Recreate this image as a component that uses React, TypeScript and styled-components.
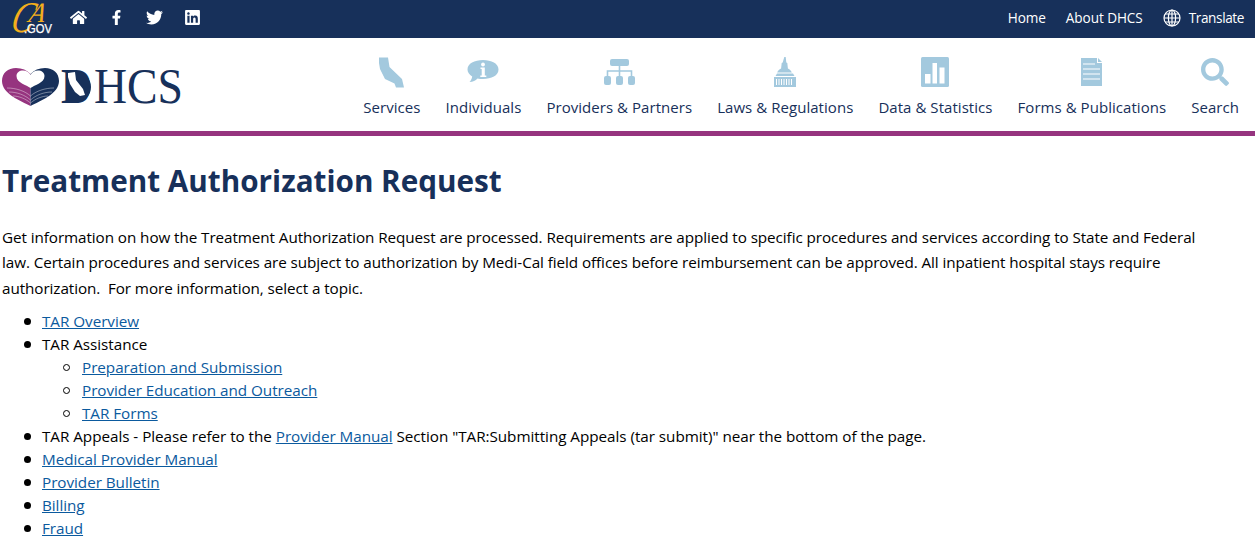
import React from "react";
import styled, { createGlobalStyle } from "styled-components";
import { FaHome, FaFacebookF, FaTwitter, FaLinkedin, FaSearch } from "react-icons/fa";

const Global = createGlobalStyle`
  html, body { margin: 0; padding: 0; background: #fff; }
  body { font-family: "Open Sans", "Noto Sans", Arial, sans-serif; font-size: 15.25px; color: #000; }
`;

const TopBar = styled.div`
  height: 38px; background: #17305a; display: flex; align-items: center; justify-content: space-between;
  padding: 0 11px 0 5px; color: #fff;
`;
const TopLeft = styled.div`display: flex; align-items: center;`;
const CaLogo = styled.svg`width: 48px; height: 36px; display: block; margin-right: 6px;`;
const SocialLink = styled.a`
  display: flex; width: 38px; justify-content: center; color: #fff; font-size: 17px; margin-top: -4px;
`;
const TopRight = styled.div`display: flex; align-items: center; gap: 20px; font-size: 13.6px; letter-spacing: -0.08px; margin-top: -3px;`;
const TopLink = styled.a`
  color: #fff; display: flex; align-items: center; gap: 8px;
  letter-spacing: ${(p: { $tight?: boolean }) => (p.$tight ? "-0.4px" : "inherit")};
`;

const Header = styled.header`
  height: 93px; border-bottom: 5px solid #96347f; display: flex; justify-content: space-between; align-items: stretch;
  padding: 0 16px 0 1px;
`;
const Logo = styled.svg`width: 200px; height: 60px; margin-top: 17px; display: block;`;
const Nav = styled.nav`display: flex; gap: 25px;`;
const NavItem = styled.a`
  display: flex; flex-direction: column; align-items: center; color: #17305a; font-size: 15px; letter-spacing: 0.05px;
  white-space: nowrap; padding-top: 17px;
`;
const NavIcon = styled.span`
  height: 33px; display: flex; align-items: center; justify-content: center; color: #a3c9de; margin-bottom: 9px;
`;

const Main = styled.main`padding: 0 2px;`;
const Title = styled.h1`
  margin: 25px 0 23.7px; font-size: 29.7px; line-height: 40px; font-weight: 700; color: #17305a;
`;
const Intro = styled.p`margin: 0 0 8.3px; line-height: 25.6px; width: 1215px; letter-spacing: -0.08px;`;
const List = styled.ul<{ $nested?: boolean }>`
  margin: 0; padding: 0 0 0 40px; list-style: none;
  line-height: 23px; letter-spacing: -0.04px;
  & > li { position: relative; }
  & > li::before {
    content: ""; position: absolute; top: 8px; box-sizing: border-box; width: 7px; height: 7px; border-radius: 50%;
    left: ${(p) => (p.$nested ? "-19px" : "-18px")};
    background: ${(p) => (p.$nested ? "transparent" : "#000")};
    border: ${(p) => (p.$nested ? "1px solid #000" : "none")};
  }
`;
const Link = styled.a`color: #0b5a9e; text-decoration: underline;`;

const California = () => (
  <svg width="28" height="32" viewBox="0 0 28 32" fill="currentColor">
    <path d="M1 1.500h9l1.500 9.500L24 23l2 8.500h-8l-1.500-4L7 23 2 13 1 7z" />
  </svg>
);
const Info = () => (
  <svg width="32" height="26" viewBox="0 0 32 26">
    <path fill="currentColor" d="M16 1c8.500 0 15.500 3.500 15.500 9.500S24.500 20 16 20c-2 0-3.800-.2-5.500-.6C8.500 21.500 6 23 2.500 23c1.300-1.400 2.500-3.500 2.700-5.600C2.300 15.700.5 13.300.5 10.500.5 4.500 7.500 1 16 1z" />
    <circle cx="16" cy="5.500" r="1.900" fill="#fff" />
    <path fill="#fff" d="M13.500 8.500h4.300v8h1.500v1.500h-6v-1.500h1.400v-6.500h-1.200z" />
  </svg>
);
const Sitemap = () => (
  <svg width="31" height="26" viewBox="0 0 31 26" fill="currentColor">
    <rect x="6" y="0" width="19" height="7" rx="2" />
    <rect x="0" y="17" width="7" height="9" rx="2" />
    <rect x="12" y="17" width="7" height="9" rx="2" />
    <rect x="24" y="17" width="7" height="9" rx="2" />
    <path fill="none" stroke="currentColor" strokeWidth="1.600" d="M15.500 7v10M3.500 17v-5h24v5" />
  </svg>
);
const Capitol = () => (
  <svg width="22" height="30" viewBox="0 0 22 30" fill="currentColor">
    <path fillRule="evenodd" d="M10.300 0h1.400l.6 5.500 1 .5.600 5.500c2 .8 3.300 2.300 3.900 4H3.200c.6-1.700 1.900-3.200 3.900-4l.6-5.500 1-.5zM3 16.500h16L20.500 19h-19zM0 20h22v10H0zm2 2v6h1v-6zm2.500 0v6h1v-6zm2.500 0v6h1v-6zm2.500 0v6h1v-6zm2.500 0v6h1v-6zm2.500 0v6h1v-6zm2.500 0v6h1v-6z" />
  </svg>
);
const Chart = () => (
  <svg width="28" height="30" viewBox="0 0 28 30">
    <rect width="28" height="30" rx="1.500" fill="currentColor" />
    <rect x="4" y="17" width="5.500" height="9.500" fill="#fff" />
    <rect x="11.500" y="6" width="4.500" height="20.500" fill="#fff" />
    <rect x="18.500" y="10.500" width="5" height="16" fill="#fff" />
  </svg>
);
const Doc = () => (
  <svg width="21" height="28" viewBox="0 0 21 28">
    <path fill="currentColor" d="M0 0h16v5h5v23H0z" />
    <path fill="currentColor" d="M17 0l4 4h-4z" />
    <path stroke="#fff" strokeWidth="1.200" d="M2 6h12M2 11h17M2 16h17M2 21h17" />
  </svg>
);
const Globe = () => (
  <svg width="18" height="18" viewBox="0 0 18 18" fill="none" stroke="#fff" strokeWidth="1.200">
    <circle cx="9" cy="9" r="8" />
    <ellipse cx="9" cy="9" rx="3.600" ry="8" />
    <path d="M9 1v16M1 9h16M2 5h14M2 13h14" />
  </svg>
);

const navItems: [string, React.ReactNode][] = [
  ["Services", <California />],
  ["Individuals", <Info />],
  ["Providers & Partners", <Sitemap />],
  ["Laws & Regulations", <Capitol />],
  ["Data & Statistics", <Chart />],
  ["Forms & Publications", <Doc />],
  ["Search", <FaSearch size={28} />],
];

export default function App() {
  return (
    <>
      <Global />
      <TopBar>
        <TopLeft>
          <CaLogo viewBox="0 0 48 36">
            <g transform="skewX(-14)">
              <text x="12" y="31" fontFamily="Liberation Serif" fontStyle="italic" fontSize="44" fill="#f3ae1c" textLength="22" lengthAdjust="spacingAndGlyphs">C</text>
              <text x="28" y="21" fontFamily="Liberation Serif" fontStyle="italic" fontSize="28" fill="#f3ae1c" textLength="16" lengthAdjust="spacingAndGlyphs">A</text>
            </g>
            <text x="19" y="32" fontFamily="Liberation Sans" fontSize="12" fill="#fff" stroke="#fff" strokeWidth=".25" textLength="28" lengthAdjust="spacingAndGlyphs">.GOV</text>
          </CaLogo>
          <SocialLink><FaHome /></SocialLink>
          <SocialLink><FaFacebookF size={15} /></SocialLink>
          <SocialLink><FaTwitter /></SocialLink>
          <SocialLink><FaLinkedin /></SocialLink>
        </TopLeft>
        <TopRight>
          <TopLink>Home</TopLink>
          <TopLink>About DHCS</TopLink>
          <TopLink $tight><Globe />Translate</TopLink>
        </TopRight>
      </TopBar>
      <Header>
        <Logo viewBox="0 0 200 60">
          <g transform="translate(0 13)">
            <path fill="#96347f" d="M29.500 38C20 33 1 26 1 13 1 5 7 0 15 0c6 0 11 2 14.500 6z" />
            <path fill="#17305a" d="M29.500 38C39 33 58 26 58 13 58 5 52 0 44 0c-6 0-11 2-14.500 6z" />
            <path fill="#fff" d="M29.500 20c-4-3-14-5-14-12 0-3.500 3-5.500 6.500-5.500 3.500 0 6 1.500 7.500 4.500 1.500-3 4-4.500 7.500-4.500 3.500 0 6.500 2 6.500 5.500 0 7-10 9-14 12z" />
            <path fill="none" stroke="#fff" strokeWidth=".5" opacity=".8" d="M6 20c9 0 18 3 23.500 8M8 24c8 0 16 3 21.500 8M12 28c6 0 13 3 17.500 7M53 20c-9 0-18 3-23.500 8M51 24c-8 0-16 3-21.500 8M47 28c-6 0-13 3-17.500 7" />
          </g>
          <path fill="#17305a" d="M65 16h6c13 0 19 8 19 16s-6 16-19 16h-6z" />
          <text x="60" y="48" fontFamily="Liberation Serif" fontWeight="700" fontSize="50" fill="#17305a" textLength="31" lengthAdjust="spacingAndGlyphs">D</text>
          <path fill="#fff" d="M67 18l7-1 1 8 7 9 2 6-5 1-5-4-5-8-2-7z" />
          <text x="93" y="48" fontFamily="Liberation Serif" fontSize="50" fill="#17305a" textLength="89" lengthAdjust="spacingAndGlyphs">HCS</text>
        </Logo>
        <Nav>
          {navItems.map(([label, icon]) => (
            <NavItem key={label}>
              <NavIcon>{icon}</NavIcon>
              {label}
            </NavItem>
          ))}
        </Nav>
      </Header>
      <Main>
        <Title>Treatment Authorization Request</Title>
        <Intro>
          Get information on how the Treatment Authorization Request are processed. Requirements are applied to specific procedures and services according to State and Federal law. Certain procedures and services are subject to authorization by Medi-Cal field offices before reimbursement can be approved. All inpatient hospital stays require authorization.&nbsp; For more information, select a topic.
        </Intro>
        <List>
          <li><Link>TAR Overview</Link></li>
          <li>TAR Assistance
            <List $nested>
              <li><Link>Preparation and Submission</Link></li>
              <li><Link>Provider Education and Outreach</Link></li>
              <li><Link>TAR Forms</Link></li>
            </List>
          </li>
          <li>TAR Appeals - Please refer to the <Link>Provider Manual</Link> Section "TAR:Submitting Appeals (tar submit)" near the bottom of the page.</li>
          <li><Link>Medical Provider Manual</Link></li>
          <li><Link>Provider Bulletin</Link></li>
          <li><Link>Billing</Link></li>
          <li><Link>Fraud</Link></li>
        </List>
      </Main>
    </>
  );
}
